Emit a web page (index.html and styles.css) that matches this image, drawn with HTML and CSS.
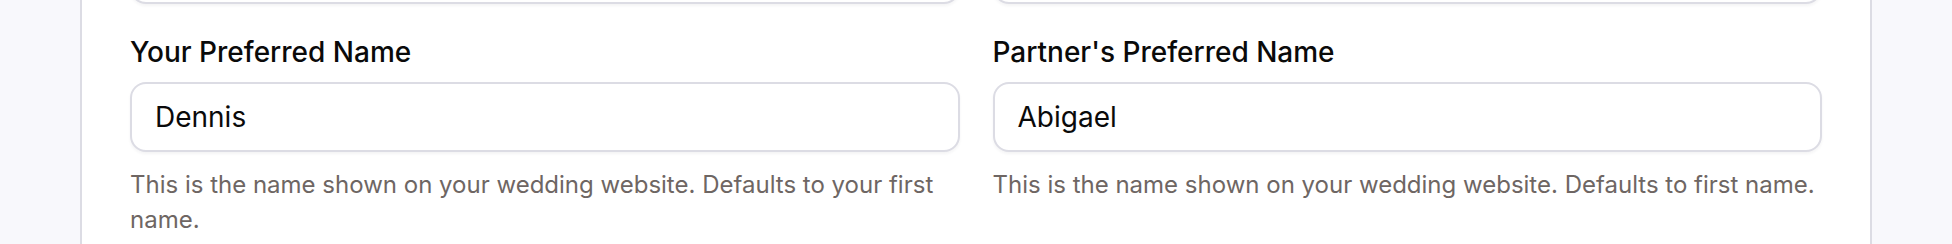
FILE: index.html
```html
<!DOCTYPE html>
<html>
<head>
<meta charset="utf-8">
<link rel="stylesheet" href="styles.css">
</head>
<body>
<div class="page">
  <div class="card">
    <div class="grid prev">
      <div class="field"><div class="input"></div></div>
      <div class="field"><div class="input"></div></div>
    </div>
    <div class="grid">
      <div class="field">
        <label class="label">Your Preferred Name</label>
        <div class="input">Dennis</div>
        <p class="help">This is the name shown on your wedding website. Defaults to your first name.</p>
      </div>
      <div class="field">
        <label class="label">Partner's Preferred Name</label>
        <div class="input">Abigael</div>
        <p class="help">This is the name shown on your wedding website. Defaults to first name.</p>
      </div>
    </div>
  </div>
</div>
</body>
</html>
```

FILE: styles.css
```css
html, body {
  margin: 0;
  padding: 0;
  background: #f8f8fc;
  font-family: Inter, "Noto Sans", sans-serif;
  overflow: hidden;
}
.page {
  padding: 0 80px;
  height: 244px;
}
.card {
  background: #ffffff;
  border-left: 2px solid #dcdce4;
  border-right: 2px solid #dcdce4;
  height: 244px;
  box-sizing: border-box;
  padding: 0 48px 0 48px;
  overflow: hidden;
}
.grid {
  display: grid;
  grid-template-columns: 1fr 1fr;
  column-gap: 33px;
}
.prev {
  margin-top: -66px;
  margin-bottom: 27px;
}
.field {
  display: flex;
  flex-direction: column;
}
.label {
  font-size: 28px;
  font-weight: 500;
  line-height: 42px;
  color: #0a0a0a;
  margin-bottom: 9px;
}
.input {
  box-sizing: border-box;
  height: 70px;
  border: 2px solid #dcdce4;
  border-radius: 16px;
  box-shadow: 0 2px 3px rgba(30, 30, 60, 0.05);
  padding: 0 23px;
  display: flex;
  align-items: center;
  font-size: 28px;
  color: #0a0a0a;
  background: #fff;
}
.help {
  margin: 15px 0 0 0;
  font-size: 24px;
  line-height: 35px;
  color: #6e6663;
}
```
